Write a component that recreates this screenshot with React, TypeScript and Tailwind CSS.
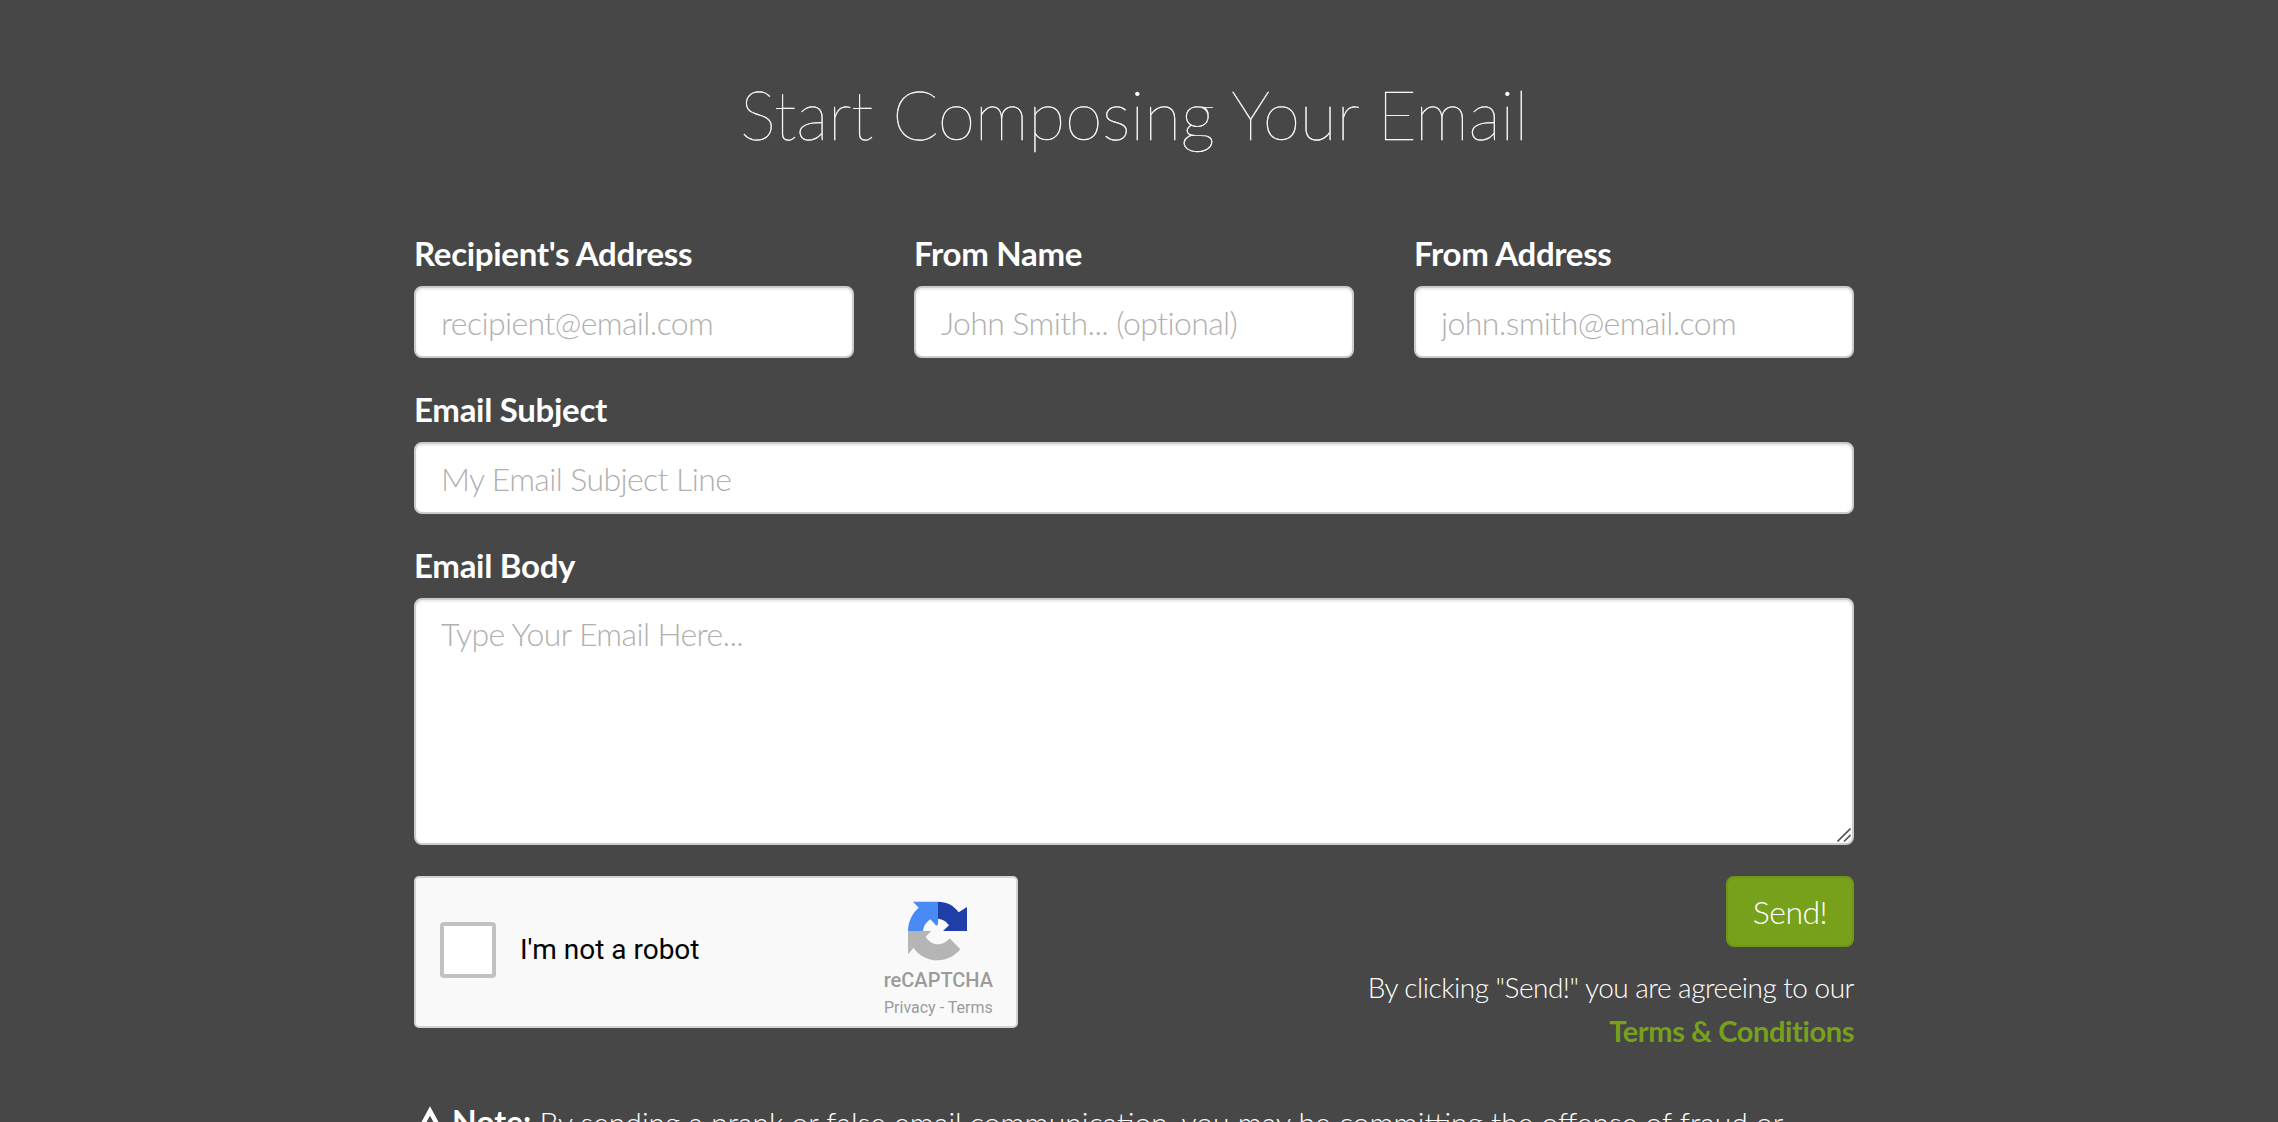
import React from "react";

const RecaptchaLogo = () => (
  <svg viewBox="55 30 180 180" className="h-[60px] w-[60px]">
    <path d="M145 32 L70 32 L87 50 C67 68 55 92 55 120 L100 120 C102 102 112 92 122 85 L140 104 L145 100 Z" fill="#4a8af4" />
    <path d="M145 32 C170 32 192 42 207 64 L232 48 L232 120 L160 120 L178 103 C170 90 158 85 145 83 Z" fill="#1f3ea8" />
    <path d="M55 120 L125 120 L108 137 C115 150 130 160 145 160 C160 160 172 152 180 142 L212 175 C195 195 170 208 145 208 C112 208 85 192 72 170 L55 190 Z" fill="#b5b5b5" />
  </svg>
);

const Field = ({
  label,
  placeholder,
  className,
}: {
  label: string;
  placeholder: string;
  className?: string;
}) => (
  <div className={className}>
    <label className="block translate-y-[1px] text-[33px] leading-[44px] font-bold tracking-[-0.3px] text-white">
      {label}
    </label>
    <input
      placeholder={placeholder}
      className="mt-[12px] block h-[72px] w-full rounded-[8px] border-2 border-[#ccc] bg-white px-[25px] text-[32px] font-light tracking-[-0.6px] shadow-[inset_0_2px_2px_rgba(0,0,0,0.08)] outline-none placeholder:text-[#b0b0b0]"
    />
  </div>
);

export default function App() {
  return (
    <div className="h-[1122px] overflow-hidden bg-[#474747] font-['Lato',sans-serif]">
      <div className="ml-[414px] w-[1440px]">
        <h1 className="pt-[68px] text-center text-[68px] leading-[92px] font-thin tracking-[-0.3px] text-white [-webkit-text-stroke:0.4px_white]">
          Start Composing Your Email
        </h1>

        <div className="mt-[70px] grid grid-cols-3 gap-x-[60px]">
          <Field label="Recipient's Address" placeholder="recipient@email.com" />
          <Field label="From Name" placeholder="John Smith... (optional)" />
          <Field label="From Address" placeholder="john.smith@email.com" />
        </div>

        <Field
          label="Email Subject"
          placeholder="My Email Subject Line"
          className="mt-[28px]"
        />

        <div className="relative mt-[28px]">
          <label className="block translate-y-[1px] text-[33px] leading-[44px] font-bold tracking-[-0.3px] text-white">
            Email Body
          </label>
          <textarea
            placeholder="Type Your Email Here..."
            className="mt-[12px] block h-[247px] w-full resize-none rounded-[8px] border-2 border-[#ccc] bg-white px-[25px] py-[10px] text-[32px] font-light tracking-[-0.6px] shadow-[inset_0_2px_2px_rgba(0,0,0,0.08)] outline-none placeholder:text-[#b0b0b0]"
          />
          {/* resize handle */}
          <svg viewBox="0 0 14 14" className="absolute right-[3px] bottom-[3px] h-[14px] w-[14px]">
            <path d="M0.500 13.500 L13.500 0.500 M7 13.500 L13.500 7" stroke="#555" strokeWidth="1.6" />
          </svg>
        </div>

        <div className="mt-[31px] flex items-start justify-between">
          {/* recaptcha box */}
          <div className="flex h-[152px] w-[604px] items-start rounded-[5px] border-2 border-[#d3d3d3] bg-[#f9f9f9] font-['Roboto',sans-serif]">
            <div className="mt-[44px] ml-[24px] h-[56px] w-[56px] rounded-[4px] border-[4px] border-[#c1c1c1] bg-white" />
            <span className="mt-[54px] ml-[24px] text-[28px] leading-[36px] text-black">I'm not a robot</span>
            <div className="mr-[23px] ml-auto flex flex-col items-center pt-[23px]">
              <RecaptchaLogo />
              <span className="mt-[7px] text-[20px] leading-[24px] font-medium text-[#9b9b9b]">reCAPTCHA</span>
              <span className="mt-[6px] text-[16px] leading-[20px] text-[#9b9b9b]">Privacy - Terms</span>
            </div>
          </div>

          <div className="flex flex-col items-end">
            <button className="h-[71px] w-[128px] rounded-[8px] border-2 border-[#6f9618] bg-[#78a11b] text-[32px] font-light tracking-[-0.5px] text-white">
              Send!
            </button>
            <p className="mt-[18px] text-[28px] leading-[44px] font-light tracking-[-0.5px] text-white">
              By clicking "Send!" you are agreeing to our
            </p>
            <a className="text-[29px] leading-[44px] font-bold tracking-[-0.4px] text-[#78a11b]">
              Terms &amp; Conditions
            </a>
          </div>
        </div>

        <p className="mt-[47px] text-[30px] leading-[44px] font-light whitespace-nowrap text-white">
          <svg viewBox="0 0 24 24" className="mr-[6px] inline h-[32px] w-[32px] fill-white align-[-3px]">
            <path d="M12 1 L24 23 L0 23 Z M12 8 L6 19 L18 19 Z" fillRule="evenodd" />
          </svg>
          <strong className="text-[32px] font-bold">Note:</strong> By sending a prank or false email communication, you may be committing the offense of fraud or
        </p>
      </div>
    </div>
  );
}
